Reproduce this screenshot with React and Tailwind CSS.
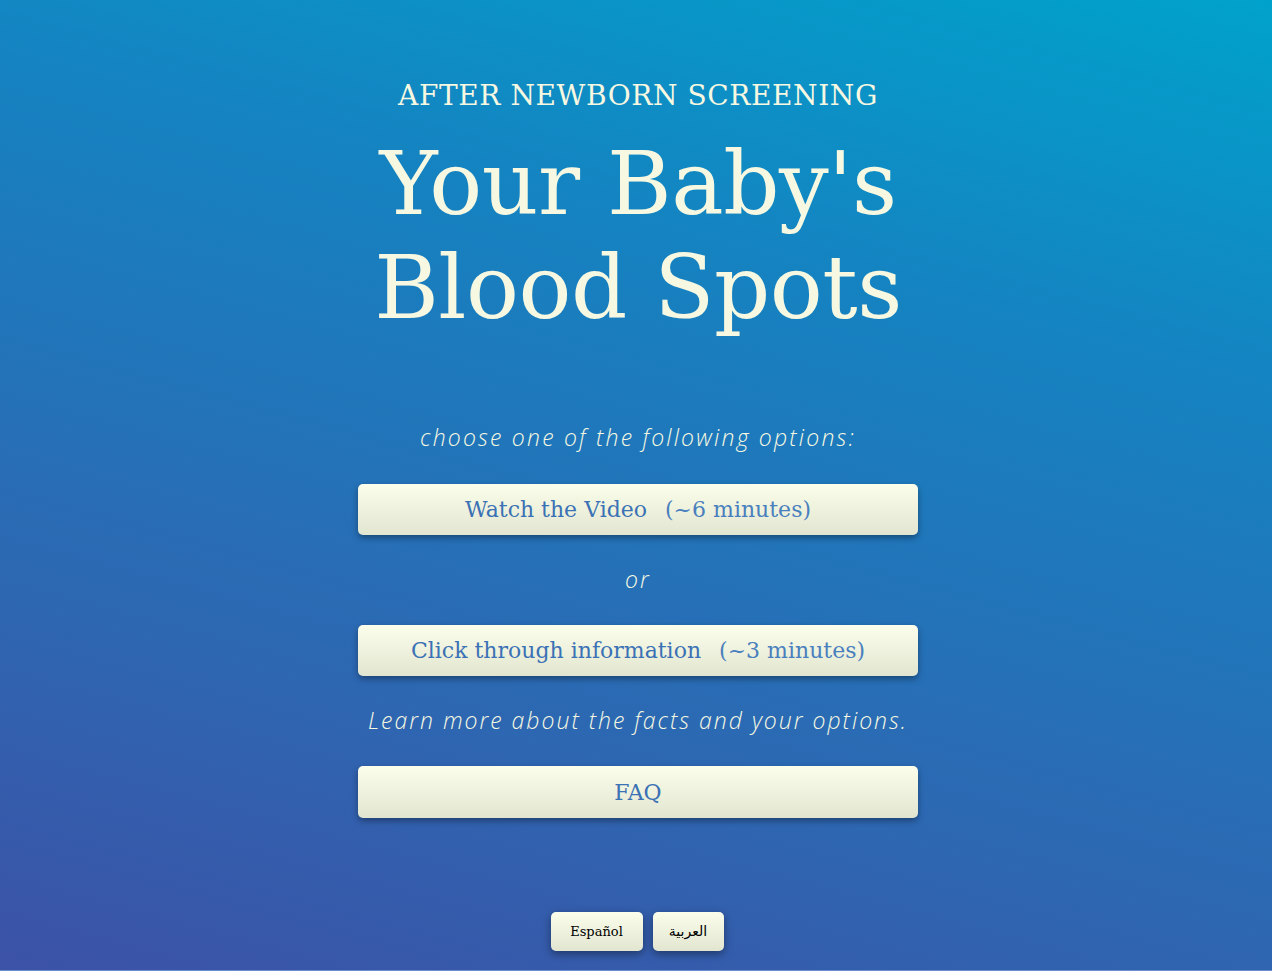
export default function App() {
  const slab = { fontFamily: '"DejaVu Serif", serif' }
  const options = [
    { label: 'Watch the Video', extra: '(~6 minutes)' },
    { label: 'Click through information', extra: '(~3 minutes)' },
  ]

  return (
    <div className="min-h-screen w-full pl-[4px] flex flex-col items-center bg-[linear-gradient(15deg,#3c52a6_0%,#2a6bb4_35%,#1583c1_70%,#00a2cb_100%)] border-b border-[#6e8fcf] text-[#f6f8e2]">
      {/* Title */}
      <div className="pt-[77px] text-center" style={slab}>
        <div className="text-[28px] leading-[38px] font-light tracking-[0.6px]">AFTER NEWBORN SCREENING</div>
        <h1 className="mt-[17px] text-[88px] leading-[104px] font-normal tracking-[-0.5px]">
          Your Baby's
          <br />
          Blood Spots
        </h1>
      </div>

      {/* Options */}
      <div className="mt-[80px] w-[560px] flex flex-col items-center" style={{ fontFamily: '"Open Sans", Lato, sans-serif' }}>
        <p className="text-[23px] leading-[34px] italic font-light tracking-[2.2px] whitespace-nowrap">choose one of the following options:</p>

        <button className="mt-[30px] h-[51px] w-full rounded-[5px] bg-gradient-to-b from-[#fafeea] to-[#e2e6d1] shadow-[0_3px_6px_rgba(0,0,0,0.35)] text-[#3b71b5] text-[22px]" style={slab}>
          {options[0].label}
          <span className="ml-[18px] font-light text-[#4a7fbe]">{options[0].extra}</span>
        </button>

        <p className="mt-[27px] text-[23px] leading-[34px] italic font-light tracking-[2.2px]">or</p>

        <button className="mt-[29px] h-[51px] w-full rounded-[5px] bg-gradient-to-b from-[#fafeea] to-[#e2e6d1] shadow-[0_3px_6px_rgba(0,0,0,0.35)] text-[#3b71b5] text-[22px]" style={slab}>
          {options[1].label}
          <span className="ml-[18px] font-light text-[#4a7fbe]">{options[1].extra}</span>
        </button>

        <p className="mt-[27px] text-[23px] leading-[34px] italic font-light tracking-[2px] whitespace-nowrap">Learn more about the facts and your options.</p>

        <button className="mt-[29px] h-[52px] w-full rounded-[5px] bg-gradient-to-b from-[#fafeea] to-[#e2e6d1] shadow-[0_3px_6px_rgba(0,0,0,0.35)] text-[#3b71b5] text-[22px]" style={slab}>
          FAQ
        </button>
      </div>

      {/* Languages */}
      <div className="mt-auto mb-[19px] mr-[2px] flex gap-[10px]">
        <button className="h-[39px] w-[92px] rounded-[5px] bg-gradient-to-b from-[#fafeea] to-[#e2e6d1] shadow-[0_3px_8px_rgba(0,0,0,0.4)] text-[13px] text-black" style={slab}>
          Español
        </button>
        <button className="h-[39px] w-[71px] rounded-[5px] bg-gradient-to-b from-[#fafeea] to-[#e2e6d1] shadow-[0_3px_8px_rgba(0,0,0,0.4)] text-[14px] text-black" style={{ fontFamily: '"DejaVu Sans", sans-serif' }}>
          العربية
        </button>
      </div>
    </div>
  )
}
